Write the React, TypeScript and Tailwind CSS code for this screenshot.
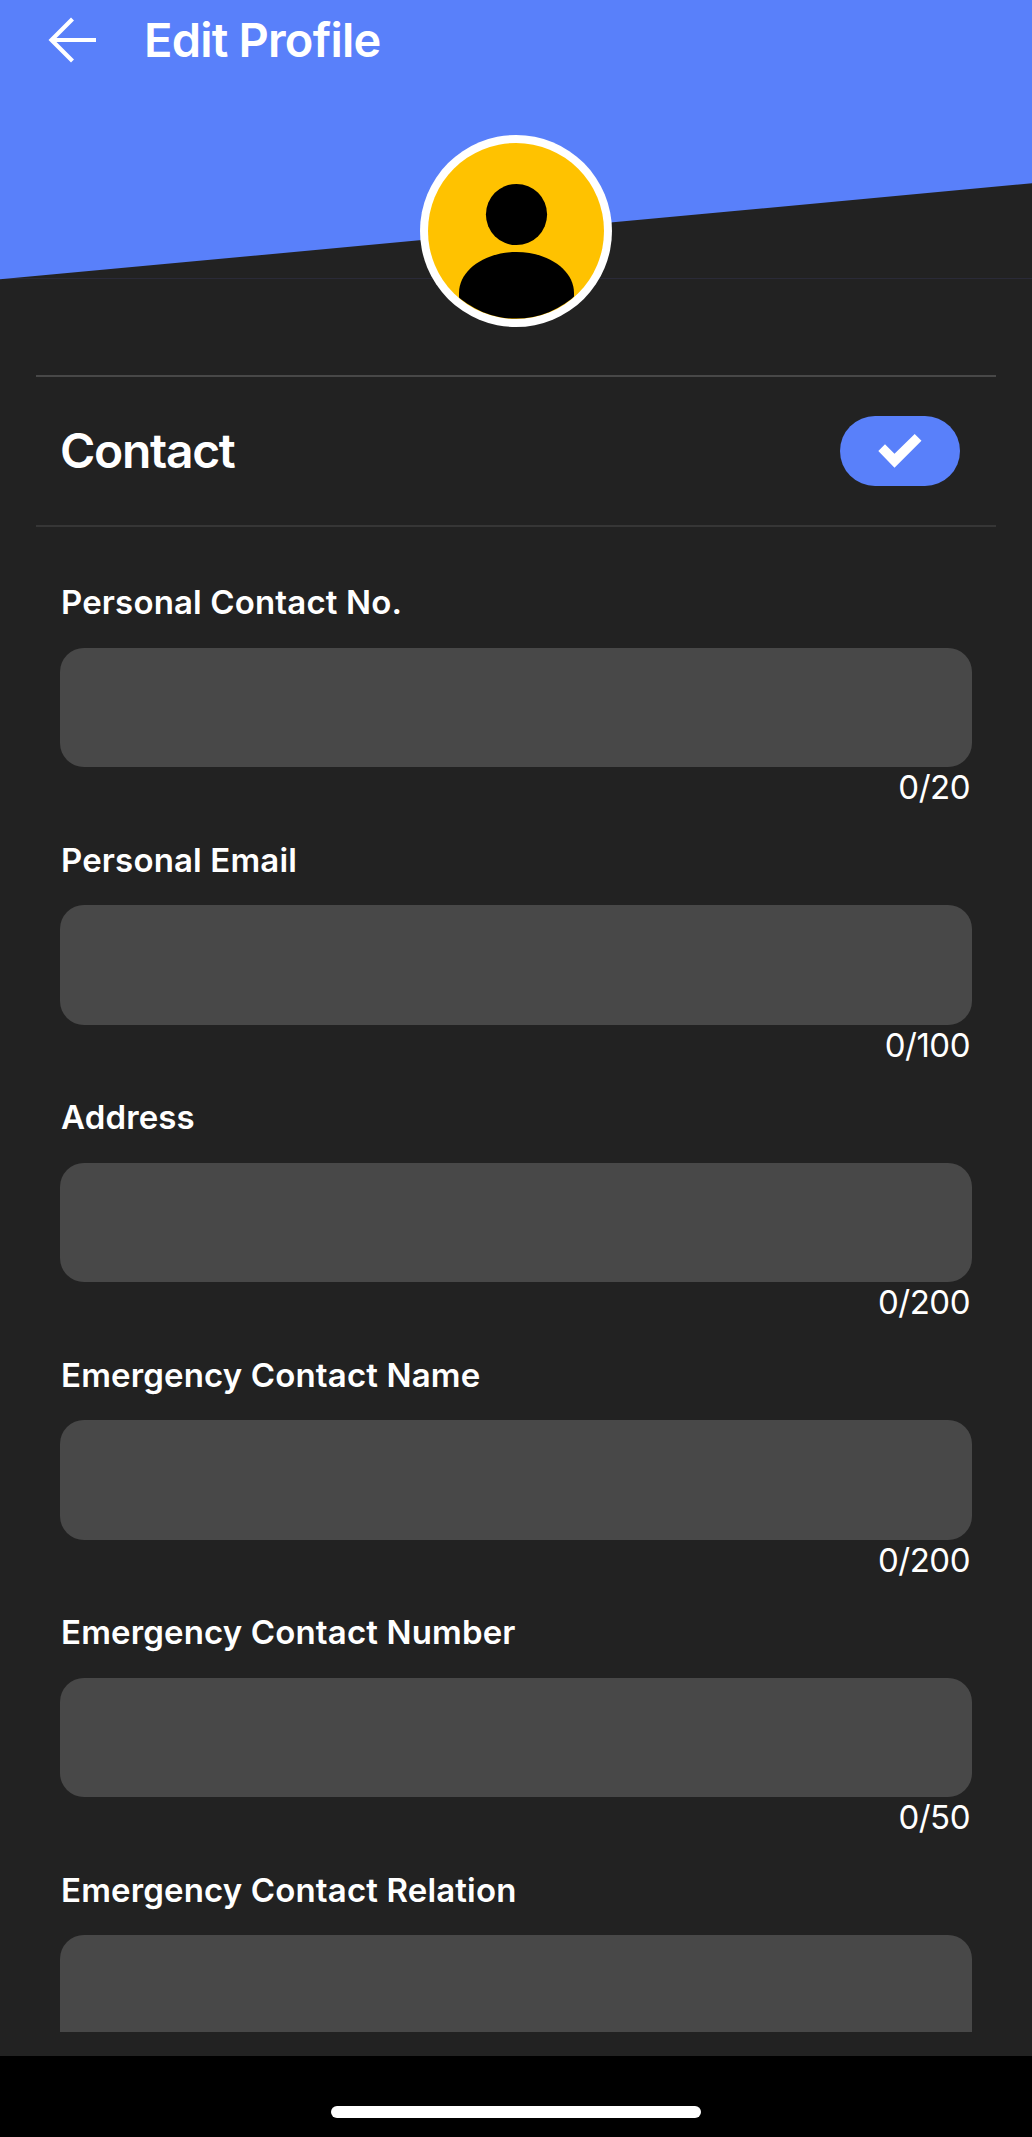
type Field = {
  label: string;
  max?: number;
};

const fields: Field[] = [
  { label: 'Personal Contact No.', max: 20 },
  { label: 'Personal Email', max: 100 },
  { label: 'Address', max: 200 },
  { label: 'Emergency Contact Name', max: 200 },
  { label: 'Emergency Contact Number', max: 50 },
  { label: 'Emergency Contact Relation' },
];

const BackIcon = () => (
  <svg width="50" height="46" viewBox="0 0 50 46" fill="none" stroke="#fff" strokeWidth="4.2">
    <path d="M49 23H4.5M25.5 2L4.5 23L25.5 44" />
  </svg>
);

const CheckIcon = () => (
  <svg width="44" height="34" viewBox="0 0 44 34" fill="#fff">
    <path d="M0.3 17L7 10.3L16.5 19.8L36.7 0L43.5 6.8L16.5 33.7Z" />
  </svg>
);

const Avatar = () => (
  <svg className="relative block" width="192" height="192" viewBox="0 0 192 192">
    <defs>
      <clipPath id="avatar-clip">
        <circle cx="96" cy="96" r="87.6" />
      </clipPath>
    </defs>
    <circle cx="96" cy="96" r="96" fill="#fff" />
    <circle cx="96" cy="96" r="88" fill="#ffc200" />
    <g clipPath="url(#avatar-clip)">
      <circle cx="96.5" cy="79.5" r="30.6" />
      <path d="M39 192V158C39 135 65 117 96.5 117S154 135 154 158V192Z" />
    </g>
  </svg>
);

const Header = () => (
  <header className="relative h-[375px] shrink-0">
    <svg className="absolute inset-x-0 top-0" width="1032" height="280" viewBox="0 0 1032 280">
      <rect y="278" width="1032" height="1" fill="#2a2a38" />
      <path d="M0 0H1032V183.3L0 279.3Z" fill="#5980fa" />
    </svg>
    <div className="relative flex h-20 items-center pl-[47px]">
      <BackIcon />
      <h1 className="ml-[47px] text-[47px] leading-[80px] font-semibold tracking-[-0.8px]">Edit Profile</h1>
    </div>
    <div className="flex justify-center pt-[55px]">
      <Avatar />
    </div>
  </header>
);

const FieldRow = ({ label, max }: Field) => (
  <div className="h-[257.5px]">
    <label className="block pl-px text-[33px] leading-10 font-semibold tracking-[0.15px]">{label}</label>
    <input className="mt-[25.5px] block h-[119.5px] w-full rounded-[24px] bg-[#484848] px-6 text-[33px] outline-none" maxLength={max} />
    {max && <div className="pr-0.5 text-right text-[33px] leading-10 tracking-[-0.5px]">0/{max}</div>}
  </div>
);

export default function App() {
  return (
    <div className="flex h-[2137px] w-[1032px] flex-col overflow-hidden bg-[#222222] font-['Inter',sans-serif] text-white">
      <Header />
      <section className="mx-9 flex h-[152px] shrink-0 items-center justify-between border-t-2 border-b-2 border-t-[#484848] border-b-[#363636] pr-9 pl-6">
        <h2 className="text-[48px] font-semibold tracking-[-1.3px]">Contact</h2>
        <button className="flex h-[70px] w-[120px] items-center justify-center rounded-full bg-[#5980fa]">
          <CheckIcon />
        </button>
      </section>
      <main className="mx-[60px] h-[1504.5px] shrink-0 overflow-hidden pt-[55px]">
        {fields.map((field) => (
          <FieldRow key={field.label} {...field} />
        ))}
      </main>
      <footer className="mt-6 flex flex-1 justify-center bg-black pt-[50px]">
        <div className="h-3 w-[370px] rounded-full bg-white"></div>
      </footer>
    </div>
  );
}
